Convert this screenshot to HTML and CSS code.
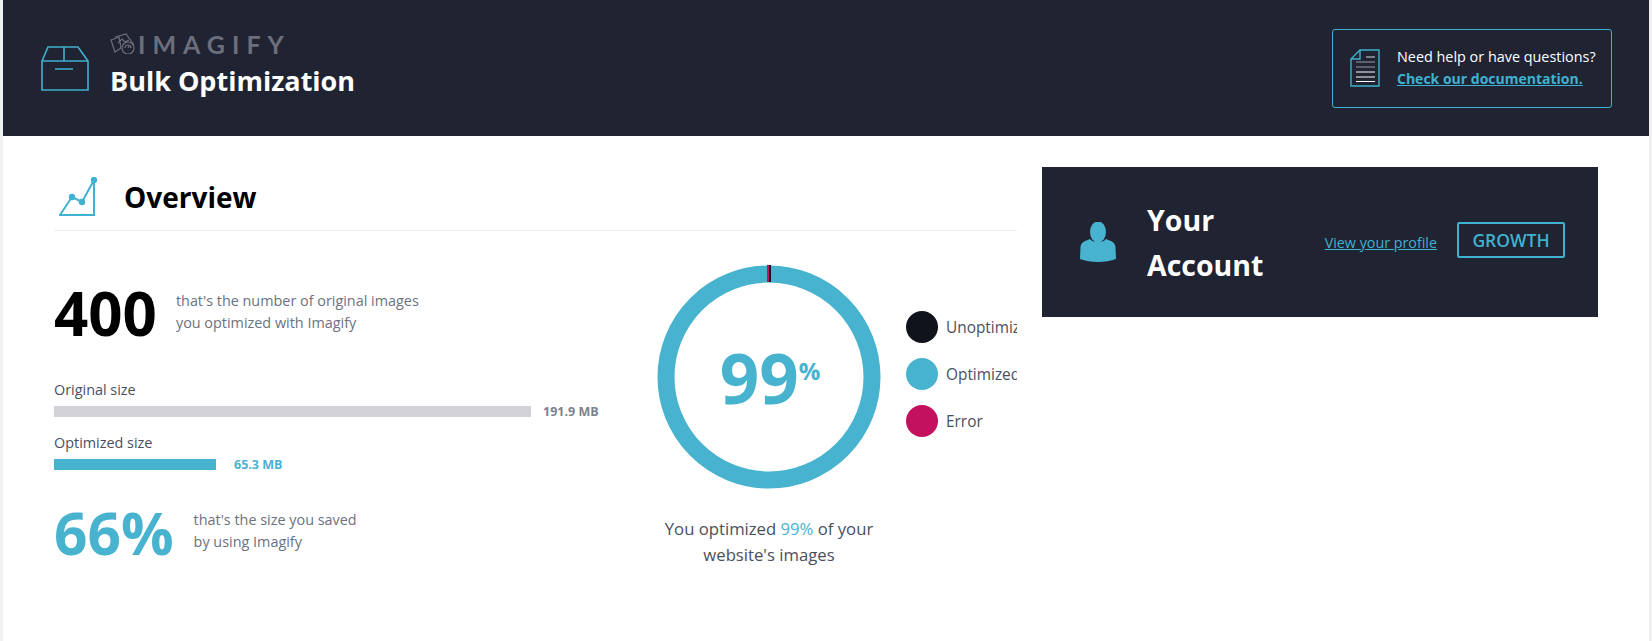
FILE: index.html
```html
<!DOCTYPE html>
<html>
<head>
  <meta charset="UTF-8">
  <title>Bulk Optimization</title>
  <link rel="stylesheet" href="styles.css">
</head>
<body>
  <div class="page">
    <!-- Header -->
    <header class="top">
      <svg class="box-icon" width="48" height="46" viewBox="0 0 48 46" fill="none" stroke="#40b1d0" stroke-width="1.6">
        <path d="M1 15 L7 1 H37 L47 15 V44 H1 Z"/>
        <path d="M1 15 H47 M23 1 V15 M14 23 H32"/>
      </svg>
      <div class="top-title">
        <div class="brand">
          <svg width="25" height="21" viewBox="0 0 25 21" fill="none" stroke="#6c6f7b" stroke-width="1.2">
            <path d="M1 7 L9 4 L11 15 L5 19 Z"/>
            <path d="M5 4 L16 1 L24 12"/>
            <path d="M8 10 L12 6 L15 9 L19 7"/>
            <circle cx="18" cy="15" r="6"/>
            <path d="M15 15 A3 3 0 0 1 21 15 M18 15 L20 12"/>
          </svg>
          <span class="brand-name">IMAGIFY</span>
        </div>
        <h1>Bulk Optimization</h1>
      </div>
      <div class="help">
        <svg width="30" height="38" viewBox="0 0 30 38" fill="none">
          <path d="M10 1 H29 V37 H1 V10 Z M10 1 V10 H1" stroke="#40b1d0" stroke-width="1.4"/>
          <path d="M16 8 H25" stroke="#b9bcc4" stroke-width="1.2"/>
          <path d="M6 13 H25 M6 18 H25" stroke="#9a9da6" stroke-width="1.2"/>
          <path d="M6 23 H25 M6 28 H25 M6 32.500 H25" stroke="#fff" stroke-width="1.2"/>
        </svg>
        <div class="help-text">
          Need help or have questions?<br>
          <a href="#">Check our documentation.</a>
        </div>
      </div>
    </header>

    <div class="content">
      <!-- Overview -->
      <section class="overview">
        <div class="overview-head">
          <svg width="40" height="40" viewBox="0 0 40 40" fill="none" stroke="#40b1d0">
            <path d="M1 38 L13 20 L23 25 L35 3 V38 Z" stroke-width="2"/>
            <g fill="#40b1d0" stroke="none">
              <circle cx="13" cy="20" r="3.200"/>
              <circle cx="23" cy="25" r="3.200"/>
              <circle cx="35" cy="3" r="3.200"/>
            </g>
          </svg>
          <h2>Overview</h2>
        </div>

        <div class="overview-body">
          <div class="stats">
            <div class="stat stat-count">
              <div class="big-number">400</div>
              <p>that's the number of original images<br>you optimized with Imagify</p>
            </div>

            <div class="bars">
              <div class="bar-label">Original size</div>
              <div class="bar-row">
                <div class="bar bar-original" style="width: 477px"></div>
                <span class="bar-value">191.9 MB</span>
              </div>
              <div class="bar-label">Optimized size</div>
              <div class="bar-row">
                <div class="bar bar-optimized" style="width: 162px"></div>
                <span class="bar-value blue">65.3 MB</span>
              </div>
            </div>

            <div class="stat stat-saved">
              <div class="big-number blue">66%</div>
              <p>that's the size you saved<br>by using Imagify</p>
            </div>
          </div>

          <div class="chart">
            <div class="donut">
              <svg width="224" height="224" viewBox="0 0 224 224" fill="none">
                <circle cx="112" cy="112" r="103" stroke="#48b3cf" stroke-width="17"/>
                <rect x="110" y="0" width="2" height="17" fill="#c4115f"/>
                <rect x="112" y="0" width="2" height="17" fill="#10131b"/>
              </svg>
              <div class="donut-value">99<sup>%</sup></div>
            </div>
            <p class="chart-caption">You optimized <span class="blue">99%</span> of your<br>website's images</p>
          </div>

          <ul class="legend">
            <li><span class="dot dot-dark"></span>Unoptimized</li>
            <li><span class="dot dot-blue"></span>Optimized</li>
            <li><span class="dot dot-red"></span>Error</li>
          </ul>
        </div>
      </section>

      <!-- Account -->
      <aside class="account">
        <svg width="36" height="40" viewBox="0 0 36 40" fill="#48b3cf">
          <ellipse cx="18" cy="10" rx="8" ry="10.500"/>
          <path d="M10 17 C12 21 24 21 26 17 C31 19 35 20 35.500 25 L36 37 C26 41 10 41 0 37 L0.500 25 C1 20 5 19 10 17 Z"/>
        </svg>
        <h3>Your Account</h3>
        <a class="profile-link" href="#">View your profile</a>
        <span class="plan">GROWTH</span>
      </aside>
    </div>
  </div>
</body>
</html>
```

FILE: styles.css
```css
* { box-sizing: border-box; }
html, body { height: 100%; }
body { margin: 0; background: #f0f0f1; font-family: "Open Sans", "Noto Sans", sans-serif; color: #4a4f5e; overflow: hidden; }
h1, h2, h3, p, ul { margin: 0; padding: 0; }
.blue { color: #48b3cf; }
.page { margin: 0 3px; height: 100%; background: #fff; }

.top { height: 136px; padding: 0 37px 0 38px; background: #1f2332; display: flex; align-items: center; color: #fff; }
.box-icon { margin-top: 2px; }
.top-title { margin-left: 21px; margin-top: -5px; }
.brand { display: flex; align-items: center; height: 24px; }
.brand-name { margin-left: 3px; font-family: Lato, sans-serif; font-size: 25px; font-weight: 700; letter-spacing: 7px; line-height: 24px; color: #6c6f7b; }
h1 { margin-top: 6px; font-size: 27px; font-weight: 700; line-height: 38px; }
.help { margin-left: auto; width: 280px; height: 79px; padding-left: 17px; border: 1px solid #40b1d0; border-radius: 3px; display: flex; align-items: center; gap: 17px; font-size: 14.400px; line-height: 22px; }
.help-text a { color: #40b1d0; font-size: 14px; font-weight: 700; }

.content { display: flex; align-items: flex-start; padding: 30px 0 0 51px; }
.overview { width: 963px; overflow: hidden; }
.overview-head { height: 65px; padding: 0 0 2px 5px; border-bottom: 1px solid #e9eff2; display: flex; align-items: center; gap: 25px; }
.overview-head h2 { font-size: 28px; font-weight: 700; color: #000; }
.overview-body { display: flex; padding: 34px 0 24px; }

.stats { width: 603px; flex-shrink: 0; }
.stat { display: flex; align-items: center; }
.stat p { margin-top: -3px; font-size: 14.400px; line-height: 22px; color: #6b7280; }
.big-number { font-size: 60px; font-weight: 700; line-height: 64px; color: #000; }
.big-number.blue { font-size: 58.500px; color: #48b3cf; }
.stat-count { gap: 19px; margin-top: 16px; }
.stat-saved { gap: 20px; margin-top: 30px; }
.bars { margin-top: 34px; }
.bar-label { font-size: 14.400px; line-height: 22px; }
.bar-row { display: flex; align-items: center; gap: 12px; margin: 5px 0 15px; height: 11px; }
.bar { height: 11px; }
.bar-original { background: #d2d2d8; }
.bar-optimized { background: #48b3cf; }
.bar-value { font-size: 12.500px; font-weight: 700; color: #7b8290; }
.bar-value.blue { margin-left: 6px; color: #48b3cf; }

.chart { width: 224px; flex-shrink: 0; text-align: center; }
.donut { position: relative; height: 224px; }
.donut-value { position: absolute; inset: 0; display: flex; align-items: center; justify-content: center; font-size: 69px; font-weight: 700; line-height: 1; color: #48b3cf; }
.donut-value sup { font-size: 24px; line-height: 1; margin-top: -12px; margin-right: -2px; }
.chart-caption { margin: 27px -20px 0; font-size: 16.700px; line-height: 26px; }

.legend { list-style: none; flex-shrink: 0; margin-left: 25px; padding-top: 46px; }
.legend li { display: flex; align-items: center; gap: 8px; height: 32px; margin-bottom: 15px; font-size: 15.400px; white-space: nowrap; }
.dot { width: 32px; height: 32px; border-radius: 50%; }
.dot-dark { background: #10131b; }
.dot-blue { background: #48b3cf; }
.dot-red { background: #c4115f; }

.account { width: 556px; height: 150px; margin-left: 25px; margin-top: 1px; padding: 0 33px 0 38px; background: #1f2332; display: flex; align-items: center; color: #fff; }
.account h3 { width: 130px; margin-left: 31px; padding-top: 2px; font-size: 28.500px; font-weight: 700; line-height: 45px; }
.profile-link { margin-left: auto; font-size: 14.300px; color: #40b1d0; }
.plan { margin-left: 20px; margin-top: -5px; width: 108px; height: 36px; border: 2px solid #40b1d0; border-radius: 2px; font-size: 17.500px; font-weight: 600; line-height: 32px; text-align: center; color: #40b1d0; }
```
